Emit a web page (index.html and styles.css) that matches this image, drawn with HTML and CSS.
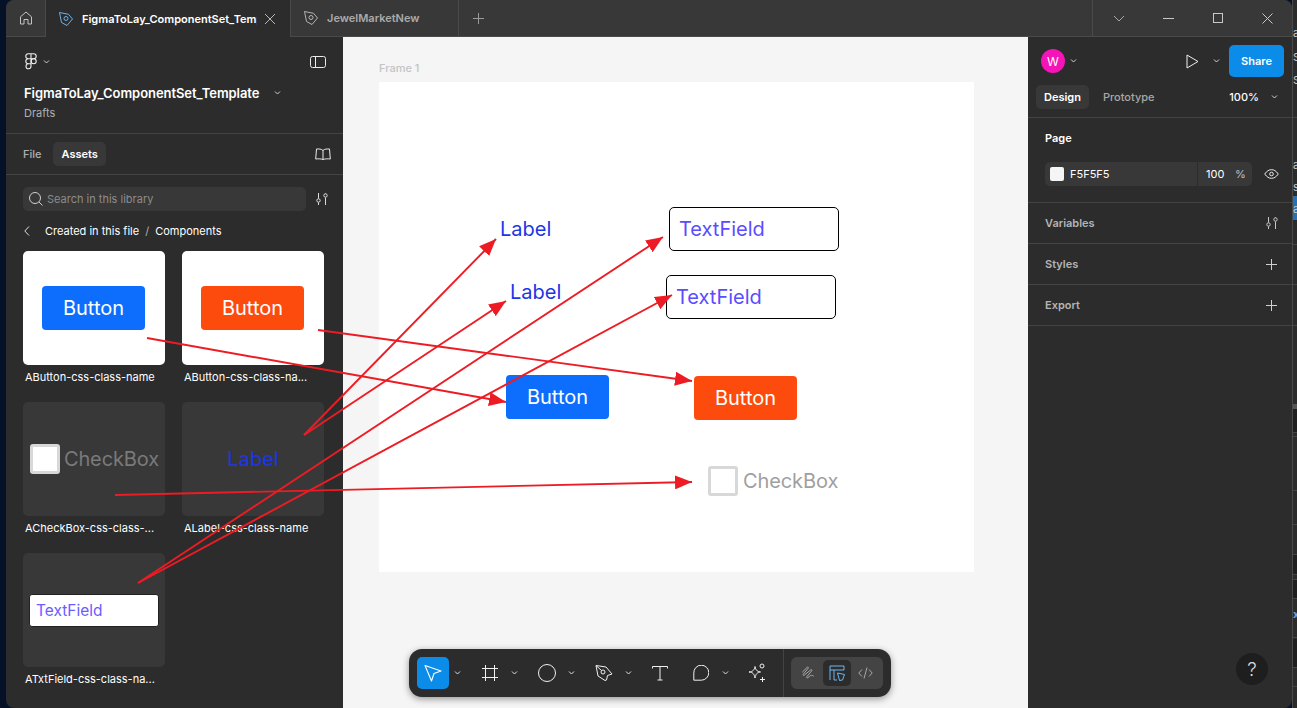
FILE: index.html
```html
<!DOCTYPE html>
<html>
<head>
    <meta charset="UTF-8">
    <title>FigmaToLay_ComponentSet_Template</title>
    <link rel="stylesheet" href="styles.css">
</head>
<body>
    <div class="window">
        <div class="tabbar">
            <div class="home-tab">
                <svg width="16" height="16" viewBox="0 0 16 16" fill="none" stroke="#c4c4c4"><path d="M2.500 14V6.800L8 2l5.500 4.800V14h-3.500V9.500H6V14z"/></svg>
            </div>
            <div class="tab tab-active">
                <svg class="tab-icon" width="16" height="16" viewBox="0 0 16 16" fill="none" stroke="#6bb1e6"><path d="M1.500 1.500l9 1.800 4 4.700-5.500 6.500-5.500-3z"/><circle cx="8" cy="7.500" r="2"/></svg>
                <span class="tab-name">FigmaToLay_ComponentSet_Template</span>
                <svg class="tab-close" width="12" height="12" viewBox="0 0 12 12" stroke="#b8b8b8"><path d="M1 1l10 10M11 1L1 11"/></svg>
            </div>
            <div class="tab tab-second">
                <svg class="tab-icon" width="16" height="16" viewBox="0 0 16 16" fill="none" stroke="#b4b4b4"><path d="M1.500 1.500l9 1.800 4 4.700-5.500 6.500-5.500-3z"/><circle cx="8" cy="7.500" r="2"/></svg>
                <span class="tab-name">JewelMarketNew</span>
            </div>
            <div class="new-tab">
                <svg width="11" height="11" viewBox="0 0 11 11" stroke="#9a9a9a"><path d="M5.500 0v11M0 5.500h11"/></svg>
            </div>
            <div class="win-controls">
                <div class="win-btn"><svg width="12" height="7" viewBox="0 0 12 7" fill="none" stroke="#a8a8a8"><path d="M1 1l5 5 5-5"/></svg></div>
                <div class="win-btn"><svg width="11" height="1" viewBox="0 0 11 1" stroke="#c8c8c8"><path d="M0 .5h11"/></svg></div>
                <div class="win-btn"><svg width="10" height="10" viewBox="0 0 10 10" fill="none" stroke="#c8c8c8"><rect x=".5" y=".5" width="9" height="9"/></svg></div>
                <div class="win-btn"><svg width="11" height="11" viewBox="0 0 11 11" stroke="#c8c8c8"><path d="M.5.500l10 10M10.500.500l-10 10"/></svg></div>
            </div>
        </div>

        <div class="workspace">
            <aside class="left-panel">
                <div class="file-head">
                    <div class="logo-row">
                        <div class="logo-menu">
                            <svg width="12" height="17" viewBox="0 0 12 17" fill="none" stroke="#f0f0f0" stroke-width="1.100"><path d="M6 .8H3.300a2.500 2.500 0 0 0 0 5H6zM6 .8h2.700a2.500 2.500 0 0 1 0 5H6zM6 5.800H3.300a2.500 2.500 0 0 0 0 5H6zM6 10.800H3.300A2.500 2.500 0 1 0 6 13.300z"/><circle cx="8.700" cy="8.300" r="2.500"/></svg>
                            <svg class="chev" width="7" height="4" viewBox="0 0 7 4" fill="none" stroke="#d0d0d0"><path d="M1 .5l2.500 2.500L6 .5"/></svg>
                        </div>
                        <svg width="16" height="12" viewBox="0 0 16 12" fill="none" stroke="#ececec"><rect x=".5" y=".5" width="15" height="11" rx="2"/><path d="M5.500 .5v11"/></svg>
                    </div>
                    <div class="file-title-row">
                        <span class="file-title">FigmaToLay_ComponentSet_Template</span>
                        <svg class="chev" width="7" height="4" viewBox="0 0 7 4" fill="none" stroke="#d0d0d0"><path d="M1 .5l2.500 2.500L6 .5"/></svg>
                    </div>
                    <div class="file-sub">Drafts</div>
                </div>

                <div class="panel-tabs">
                    <span class="panel-tab">File</span>
                    <span class="panel-tab panel-tab-on">Assets</span>
                    <svg class="book" width="16" height="12" viewBox="0 0 16 12" fill="none" stroke="#ececec"><path d="M8 2.500C6.500 1 4 .8 1.500 1L.7 11c2.500-.3 5.500-.2 7.300.5 1.800-.7 4.800-.8 7.300-.5L14.500 1C12 .8 9.500 1 8 2.500zV11.500"/></svg>
                </div>

                <div class="assets">
                    <div class="search-row">
                        <div class="search-box">
                            <svg width="14" height="14" viewBox="0 0 14 14" fill="none" stroke="#d0d0d0"><circle cx="6" cy="6" r="5.500"/><path d="M10 10l3.500 3.500"/></svg>
                            <span>Search in this library</span>
                        </div>
                        <svg class="tune" width="12" height="12" viewBox="0 0 12 12" fill="none" stroke="#dcdcdc"><path d="M2.500 0v5.500M2.500 9.500V12M9.500 0v.5M9.500 4.500V12"/><circle cx="2.500" cy="7.500" r="1.700"/><circle cx="9.500" cy="2.500" r="1.700"/></svg>
                    </div>
                    <div class="crumbs">
                        <svg width="6" height="10" viewBox="0 0 6 10" fill="none" stroke="#e0e0e0"><path d="M5 .5L.8 5 5 9.500"/></svg>
                        <span class="crumb-path">Created in this file<i>/</i>Components</span>
                    </div>
                    <div class="comp-grid">
                        <div class="comp">
                            <div class="thumb thumb-white"><div class="btn btn-blue">Button</div></div>
                            <div class="comp-name">AButton-css-class-name</div>
                        </div>
                        <div class="comp">
                            <div class="thumb thumb-white"><div class="btn btn-orange">Button</div></div>
                            <div class="comp-name">AButton-css-class-na...</div>
                        </div>
                        <div class="comp">
                            <div class="thumb">
                                <div class="check check-thumb"><span class="check-box"></span><span class="check-text">CheckBox</span></div>
                            </div>
                            <div class="comp-name">ACheckBox-css-class-...</div>
                        </div>
                        <div class="comp">
                            <div class="thumb"><span class="label-text">Label</span></div>
                            <div class="comp-name">ALabel-css-class-name</div>
                        </div>
                        <div class="comp">
                            <div class="thumb"><div class="thumb-field">TextField</div></div>
                            <div class="comp-name">ATxtField-css-class-na...</div>
                        </div>
                    </div>
                </div>
            </aside>

            <main class="canvas">
                <div class="frame-name">Frame 1</div>
                <div class="frame">
                    <span class="item label-text label-a">Label</span>
                    <span class="item label-text label-b">Label</span>
                    <div class="item field field-a">TextField</div>
                    <div class="item field field-b">TextField</div>
                    <div class="item btn btn-blue button-a">Button</div>
                    <div class="item btn btn-orange button-b">Button</div>
                    <div class="item check check-a"><span class="check-box"></span><span class="check-text check-text-light">CheckBox</span></div>
                </div>

                <div class="toolbar">
                    <div class="tool tool-on">
                        <svg width="18" height="18" viewBox="0 0 18 18" fill="none" stroke="#fff" stroke-width="1.100" stroke-linejoin="round"><path d="M1 1.500l16 5.500-7 2.500-2.500 7.500z"/></svg>
                    </div>
                    <svg class="chev tool-chev" width="7" height="4" viewBox="0 0 7 4" fill="none" stroke="#e0e0e0"><path d="M1 .5l2.500 2.500L6 .5"/></svg>
                    <div class="tool tool-gap">
                        <svg width="16" height="16" viewBox="0 0 16 16" fill="none" stroke="#f0f0f0"><path d="M3.500 0v16M12.500 0v16M0 3.500h16M0 12.500h16"/></svg>
                    </div>
                    <svg class="chev tool-chev" width="7" height="4" viewBox="0 0 7 4" fill="none" stroke="#e0e0e0"><path d="M1 .5l2.500 2.500L6 .5"/></svg>
                    <div class="tool tool-gap">
                        <svg width="18" height="18" viewBox="0 0 18 18" fill="none" stroke="#f0f0f0"><circle cx="9" cy="9" r="8.500"/></svg>
                    </div>
                    <svg class="chev tool-chev" width="7" height="4" viewBox="0 0 7 4" fill="none" stroke="#e0e0e0"><path d="M1 .5l2.500 2.500L6 .5"/></svg>
                    <div class="tool tool-gap">
                        <svg width="18" height="18" viewBox="0 0 18 18" fill="none" stroke="#f0f0f0" stroke-linejoin="round"><path d="M1 1.500l10 1.500 6 7-4.500 1.500-1 4.500-1.500.5L3 12z"/><circle cx="8" cy="8" r="2"/><path d="M1 1.500L6.500 6.500"/></svg>
                    </div>
                    <svg class="chev tool-chev" width="7" height="4" viewBox="0 0 7 4" fill="none" stroke="#e0e0e0"><path d="M1 .5l2.500 2.500L6 .5"/></svg>
                    <div class="tool tool-text">
                        <svg width="16" height="16" viewBox="0 0 16 16" fill="none" stroke="#f0f0f0"><path d="M.5 3.500v-2h15v2M8 1.500v13.500M5.500 15h5"/></svg>
                    </div>
                    <div class="tool tool-shape">
                        <svg width="16" height="16" viewBox="0 0 16 16" fill="none" stroke="#f0f0f0"><path d="M.8 15.200V8a7.500 7.500 0 1 1 7.500 7.200z" stroke-linejoin="round"/></svg>
                    </div>
                    <svg class="chev tool-chev" width="7" height="4" viewBox="0 0 7 4" fill="none" stroke="#e0e0e0"><path d="M1 .5l2.500 2.500L6 .5"/></svg>
                    <div class="tool tool-ai">
                        <svg width="20" height="20" viewBox="0 0 20 20" fill="none" stroke="#f0f0f0"><path d="M8 3.500c.5 3.500 2 5 5.500 5.500-3.500.5-4.500 1.500-5.500 6-1-4.500-2-5.500-6-6 4-.5 5.500-2 6-5.500z" stroke-linejoin="round"/><circle cx="15" cy="3" r="2"/><path d="M15.500 14v5M13 16.500h5"/></svg>
                    </div>
                    <div class="mode-wrap">
                        <div class="modes">
                            <div class="mode">
                                <svg width="14" height="14" viewBox="0 0 14 14" fill="none" stroke="#a8a8a8" stroke-linecap="round"><path d="M1.500 6L6 1.500c1-1 2 0 1 1L2.500 8c-1 1 0 2 1 1l6-5c1-1 2 0 1 1L6 10.500c-1 1 0 2 1 1l2-1.500c1-1 2-1 3.500 0"/></svg>
                            </div>
                            <div class="mode mode-on">
                                <svg width="17" height="17" viewBox="0 0 17 17" fill="none" stroke="#6fb6ec"><path d="M1 15V1h14v4M1 5h14M5 5v10h3"/><path d="M8.500 8l7 1.500-2 5.500-3 .5z"/></svg>
                            </div>
                            <div class="mode">
                                <svg width="15" height="12" viewBox="0 0 15 12" fill="none" stroke="#a8a8a8"><path d="M4 2.500L.8 6 4 9.500M11 2.500L14.200 6 11 9.500M9 .5L6 11.500"/></svg>
                            </div>
                        </div>
                    </div>
                </div>
            </main>

            <aside class="right-panel">
                <div class="top-row">
                    <div class="avatar-wrap">
                        <span class="avatar">W</span>
                        <svg class="chev" width="7" height="4" viewBox="0 0 7 4" fill="none" stroke="#d0d0d0"><path d="M1 .5l2.500 2.500L6 .5"/></svg>
                    </div>
                    <svg class="play" width="13" height="15" viewBox="0 0 13 15" fill="none" stroke="#f0f0f0" stroke-linejoin="round"><path d="M1 1v13l11-6.500z"/></svg>
                    <svg class="chev play-chev" width="7" height="4" viewBox="0 0 7 4" fill="none" stroke="#d0d0d0"><path d="M1 .5l2.500 2.500L6 .5"/></svg>
                    <div class="share">Share</div>
                </div>
                <div class="mode-tabs">
                    <span class="mode-tab mode-tab-on">Design</span>
                    <span class="mode-tab">Prototype</span>
                    <span class="zoom-val">100%</span>
                    <svg class="chev" width="7" height="4" viewBox="0 0 7 4" fill="none" stroke="#d0d0d0"><path d="M1 .5l2.500 2.500L6 .5"/></svg>
                </div>
                <section class="page-sec">
                    <div class="sec-title">Page</div>
                    <div class="fill-row">
                        <div class="fill-box">
                            <span class="swatch"></span>
                            <span class="hex">F5F5F5</span>
                            <span class="opacity">100</span>
                            <span class="pct">%</span>
                        </div>
                        <svg width="15" height="10" viewBox="0 0 15 10" fill="none" stroke="#e8e8e8"><path d="M.7 5C3 1.800 5 .7 7.500.7S12 1.800 14.300 5C12 8.200 10 9.300 7.500 9.300S3 8.200.7 5z"/><circle cx="7.500" cy="5" r="1.800"/></svg>
                    </div>
                </section>
                <section class="row-sec">
                    <span>Variables</span>
                    <svg class="tune-right" width="12" height="12" viewBox="0 0 12 12" fill="none" stroke="#c8c8c8"><path d="M2.500 0v5.500M2.500 9.500V12M9.500 0v.5M9.500 4.500V12"/><circle cx="2.500" cy="7.500" r="1.700"/><circle cx="9.500" cy="2.500" r="1.700"/></svg>
                </section>
                <section class="row-sec">
                    <span>Styles</span>
                    <svg width="11" height="11" viewBox="0 0 11 11" stroke="#d0d0d0"><path d="M5.500 0v11M0 5.500h11"/></svg>
                </section>
                <section class="row-sec">
                    <span>Export</span>
                    <svg width="11" height="11" viewBox="0 0 11 11" stroke="#d0d0d0"><path d="M5.500 0v11M0 5.500h11"/></svg>
                </section>
                <div class="help">?</div>
            </aside>
        </div>

        <!-- arrows drawn over the whole window, coords are page coords -->
        <svg class="arrows" width="1297" height="708" viewBox="0 0 1297 708" fill="none" stroke="#ed1c24" stroke-width="1.900">
            <defs>
                <marker id="head" markerUnits="userSpaceOnUse" markerWidth="18" markerHeight="14" refX="17" refY="7" orient="auto">
                    <path d="M0 0L17 7 0 14z" fill="#ed1c24" stroke="none"/>
                </marker>
            </defs>
            <path d="M147 338L506 402" marker-end="url(#head)"/>
            <path d="M318 330L692 381" marker-end="url(#head)"/>
            <path d="M304 435L496 239" marker-end="url(#head)"/>
            <path d="M304 435L506 301" marker-end="url(#head)"/>
            <path d="M115 495L692 482" marker-end="url(#head)"/>
            <path d="M138 583L663 237" marker-end="url(#head)"/>
            <path d="M138 583L672 295" marker-end="url(#head)"/>
        </svg>
    </div>

    <!-- sliver of the window behind -->
    <div class="side-strip">
        <svg width="4" height="708" viewBox="0 0 4 708">
            <rect y="196" width="4" height="24" fill="#2472b3"/>
            <rect y="404" width="4" height="5" fill="#555"/>
            <rect y="409" width="4" height="23" fill="#1f1f1f"/>
            <rect y="554" width="4" height="20" fill="#1f1f1f"/>
            <rect y="579" width="4" height="19" fill="#1f1f1f"/>
            <rect y="639" width="4" height="28" fill="#1f1f1f"/>
            <path d="M0 117.500h4M0 244.500h4M0 284.500h4M0 325.500h4M0 432.500h4M0 436.500h4M0 490.500h4M0 524.500h4M0 554.500h4M0 574.500h4M0 579.500h4M0 598.500h4M0 637.500h4M0 667.500h4M0 686.500h4" stroke="#444"/>
            <g class="strip-text">
                <text y="37">a</text>
                <text y="61">S</text>
                <text y="84">S</text>
                <text y="169">a</text>
                <text y="191">s</text>
                <text y="213">a</text>
                <text class="strip-x" y="618">x</text>
            </g>
        </svg>
    </div>
</body>
</html>
```

FILE: styles.css
```css
* {
    box-sizing: border-box;
}

html, body {
    height: 100%;
}

body {
    margin: 0;
    height: 708px;
    overflow: hidden;
    background-color: #041126;
    display: flex;
    padding-left: 6px;
    font-family: Inter, "Liberation Sans", sans-serif;
    font-size: 11px;
    color: #fff;
}

svg {
    display: block;
    flex: none;
}

.window {
    width: 1286px;
    height: 708px;
    flex: none;
    display: flex;
    flex-direction: column;
    border-radius: 8px;
    overflow: hidden;
    background-color: #2c2c2c;
}

.side-strip {
    flex: 1;
    background-color: #2b2b2b;
    border-left: 1px solid #4a4a4a;
    overflow: hidden;
}

.strip-text {
    font-size: 11px;
    fill: #c8c8c8;
}

.strip-x {
    fill: #6ea7d0;
    font-weight: 700;
}

/* tab bar */
.tabbar {
    height: 37px;
    display: flex;
    flex: none;
    background-color: #383838;
    border-bottom: 1px solid #4a4a4a;
}

.home-tab {
    width: 40px;
    display: flex;
    align-items: center;
    justify-content: center;
    border-right: 1px solid #4a4a4a;
}

.tab {
    display: flex;
    align-items: center;
    border-right: 1px solid #4a4a4a;
    font-weight: 600;
    font-size: 11px;
}

.tab-active {
    width: 245px;
    background-color: #2c2c2c;
    padding-left: 12px;
    height: 37px;
}

.tab-second {
    width: 168px;
    padding-left: 12px;
    color: #ababab;
}

.tab-icon {
    margin-right: 8px;
}

.tab-active .tab-name {
    width: 175px;
    overflow: hidden;
    white-space: nowrap;
}

.tab-close {
    margin-left: 7px;
}

.new-tab {
    width: 38px;
    display: flex;
    align-items: center;
    justify-content: center;
}

.win-controls {
    margin-left: auto;
    width: 200px;
    padding-left: 1px;
    display: flex;
    align-items: center;
    border-left: 1px solid #4a4a4a;
}

.win-btn {
    flex: 1;
    display: flex;
    justify-content: center;
}

/* left panel */
.workspace {
    flex: 1;
    display: flex;
    min-height: 0;
}

.left-panel {
    width: 337px;
    flex: none;
    display: flex;
    flex-direction: column;
}

.file-head {
    height: 97px;
    padding: 16px 17px 0 19px;
    border-bottom: 1px solid #444;
}

.logo-row {
    display: flex;
    align-items: center;
    justify-content: space-between;
    height: 17px;
}

.logo-menu {
    display: flex;
    align-items: center;
    gap: 6px;
}

.file-title-row {
    display: flex;
    align-items: center;
    margin-top: 15px;
    margin-left: -1px;
    gap: 15px;
}

.file-title {
    font-size: 13px;
    font-weight: 600;
    letter-spacing: -0.06px;
}

.file-sub {
    margin-top: 5px;
    margin-left: -1px;
    color: #b0b0b0;
}

.panel-tabs {
    height: 41px;
    padding: 0 12px 0 8px;
    display: flex;
    align-items: center;
    gap: 3px;
    border-bottom: 1px solid #444;
}

.panel-tab {
    padding: 0 8px 0 9px;
    line-height: 24px;
    color: #b0b0b0;
    font-weight: 500;
    border-radius: 5px;
}

.panel-tab-on {
    background-color: #383838;
    color: #fff;
    font-weight: 600;
}

.book {
    margin-left: auto;
}

.assets {
    padding: 12px 0 0 17px;
}

.search-row {
    display: flex;
    align-items: center;
    gap: 10px;
}

.search-box {
    width: 283px;
    height: 24px;
    padding-left: 6px;
    display: flex;
    align-items: center;
    gap: 4px;
    background-color: #383838;
    border-radius: 5px;
    color: #8c8c8c;
}

.crumbs {
    display: flex;
    align-items: center;
    margin-top: 12px;
    height: 16px;
    gap: 15px;
    font-weight: 400;
}

.crumbs svg {
    margin-left: 1px;
}

.crumb-path i {
    font-style: normal;
    margin: 0 6px;
    color: #b0b0b0;
}

.comp-grid {
    margin-top: 12px;
    display: grid;
    grid-template-columns: 142px 142px;
    column-gap: 17px;
    row-gap: 0;
}

.comp {
    height: 151px;
}

.thumb {
    height: 114px;
    border-radius: 5px;
    background-color: #383838;
    display: flex;
    align-items: center;
    justify-content: center;
}

.thumb-white {
    background-color: #fff;
}

.thumb .btn {
    margin-right: 1px;
}

.comp-name {
    margin: 5px 0 0 2px;
    line-height: 14px;
    font-weight: 400;
    white-space: nowrap;
}

/* shared component looks */
.btn {
    width: 103px;
    height: 44px;
    border-radius: 4px;
    display: flex;
    align-items: center;
    justify-content: center;
    font-size: 20px;
    color: #fff;
    font-weight: 400;
}

.btn-blue {
    background-color: #0d6efd;
}

.btn-orange {
    background-color: #fd4a0d;
}

.check {
    display: flex;
    align-items: center;
    gap: 5px;
}

.check-thumb {
    margin-left: 1px;
    gap: 4px;
}

.check-box {
    width: 30px;
    height: 30px;
    background-color: #fff;
    border: 3px solid #d8d8d8;
    border-radius: 3px;
}

.check-text {
    font-size: 20px;
    letter-spacing: -0.1px;
    color: #7a7a7a;
}

.check-text-light {
    color: #9f9f9f;
}

.label-text {
    font-size: 20px;
    line-height: 26px;
    color: #1c36e6;
}

.thumb-field {
    width: 130px;
    height: 33px;
    padding-left: 6px;
    display: flex;
    align-items: center;
    background-color: #fff;
    border: 1px solid #222;
    border-radius: 3px;
    font-size: 15.5px;
    color: #6a5cff;
}

/* canvas */
.canvas {
    width: 685px;
    flex: none;
    position: relative;
    background-color: #f5f5f5;
    padding: 24px 0 0 36px;
}

.frame-name {
    line-height: 14px;
    color: #c4c4c4;
    font-weight: 500;
}

.frame {
    position: relative;
    margin-top: 7px;
    width: 595px;
    height: 490px;
    background-color: #fff;
}

.item {
    position: absolute;
}

.label-a {
    left: 121px;
    top: 134px;
}

.label-b {
    left: 131px;
    top: 197px;
}

.field {
    width: 170px;
    height: 44px;
    padding-left: 9px;
    display: flex;
    align-items: center;
    border: 1px solid #000;
    border-radius: 5px;
    font-size: 20px;
    color: #5a4cff;
}

.field-a {
    left: 290px;
    top: 125px;
}

.field-b {
    left: 287px;
    top: 193px;
}

.button-a {
    left: 127px;
    top: 293px;
}

.button-b {
    left: 315px;
    top: 294px;
}

.check-a {
    left: 329px;
    top: 384px;
}

/* bottom toolbar */
.toolbar {
    position: absolute;
    left: 66px;
    bottom: 11px;
    width: 482px;
    height: 48px;
    padding-left: 8px;
    display: flex;
    align-items: center;
    background-color: #2c2c2c;
    border-radius: 13px;
    box-shadow: 0 2px 7px rgba(0, 0, 0, 0.4);
}

.tool {
    width: 32px;
    height: 32px;
    display: flex;
    align-items: center;
    justify-content: center;
    border-radius: 5px;
}

.tool-on {
    background-color: #0c8ce9;
}

.tool-chev {
    margin-left: 5px;
}

.tool-gap {
    margin-left: 13px;
}

.tool-text {
    margin-left: 12px;
}

.tool-shape {
    margin-left: 9px;
}

.tool-ai {
    margin-left: 12px;
}

.mode-wrap {
    margin-left: 10px;
    height: 48px;
    padding-left: 7px;
    display: flex;
    align-items: center;
    border-left: 1px solid #444;
}

.modes {
    width: 92px;
    height: 32px;
    padding: 3px;
    display: flex;
    background-color: #444;
    border-radius: 6px;
}

.mode {
    flex: 1;
    display: flex;
    align-items: center;
    justify-content: center;
    border-radius: 5px;
}

.mode-on {
    background-color: #2c2c2c;
}

/* right panel */
.right-panel {
    width: 264px;
    flex: none;
    position: relative;
    display: flex;
    flex-direction: column;
}

.top-row {
    height: 48px;
    padding: 0 8px 0 13px;
    display: flex;
    align-items: center;
}

.avatar-wrap {
    display: flex;
    align-items: center;
    gap: 5px;
    margin-right: auto;
}

.avatar {
    width: 24px;
    height: 24px;
    border-radius: 50%;
    background-color: #f514b7;
    font-size: 12px;
    display: flex;
    align-items: center;
    justify-content: center;
}

.play-chev {
    margin: 0 9px 0 14px;
}

.share {
    width: 55px;
    height: 32px;
    background-color: #0c8ce9;
    border-radius: 5px;
    display: flex;
    align-items: center;
    justify-content: center;
    font-weight: 600;
}

.mode-tabs {
    height: 33px;
    padding: 0 14px 9px 8px;
    display: flex;
    align-items: center;
    border-bottom: 1px solid #444;
}

.mode-tab {
    padding: 0 8px;
    line-height: 24px;
    color: #a8a8a8;
    font-weight: 500;
    border-radius: 5px;
    margin-right: 6px;
}

.mode-tab-on {
    background-color: #383838;
    color: #fff;
    font-weight: 600;
}

.zoom-val {
    margin-left: auto;
    margin-right: 12px;
    font-weight: 500;
}

.page-sec {
    height: 85px;
    padding: 13px 13px 0 17px;
    border-bottom: 1px solid #444;
}

.sec-title {
    font-weight: 600;
    line-height: 14px;
}

.fill-row {
    margin-top: 17px;
    display: flex;
    align-items: center;
    justify-content: space-between;
}

.fill-box {
    width: 207px;
    height: 24px;
    padding-left: 5px;
    display: flex;
    align-items: center;
    background-color: #383838;
    border-radius: 5px;
}

.swatch {
    width: 14px;
    height: 14px;
    background-color: #f5f5f5;
    border-radius: 2px;
}

.hex {
    margin-left: 6px;
    width: 127px;
}

.opacity {
    height: 24px;
    line-height: 24px;
    width: 38px;
    padding-left: 8px;
    border-left: 1px solid #2c2c2c;
}

.pct {
    color: #c0c0c0;
}

.row-sec {
    height: 41px;
    padding: 0 15px 0 17px;
    display: flex;
    align-items: center;
    justify-content: space-between;
    border-bottom: 1px solid #444;
    color: #b4b4b4;
    font-weight: 600;
}

.tune-right {
    margin-right: -1px;
}

.help {
    position: absolute;
    right: 24px;
    bottom: 23px;
    width: 32px;
    height: 32px;
    border-radius: 50%;
    background-color: #1e1e1e;
    display: flex;
    align-items: center;
    justify-content: center;
    font-size: 19px;
    font-weight: 300;
    color: #d8d8d8;
}

.arrows {
    position: absolute;
    left: 0;
    top: 0;
    pointer-events: none;
}
```
